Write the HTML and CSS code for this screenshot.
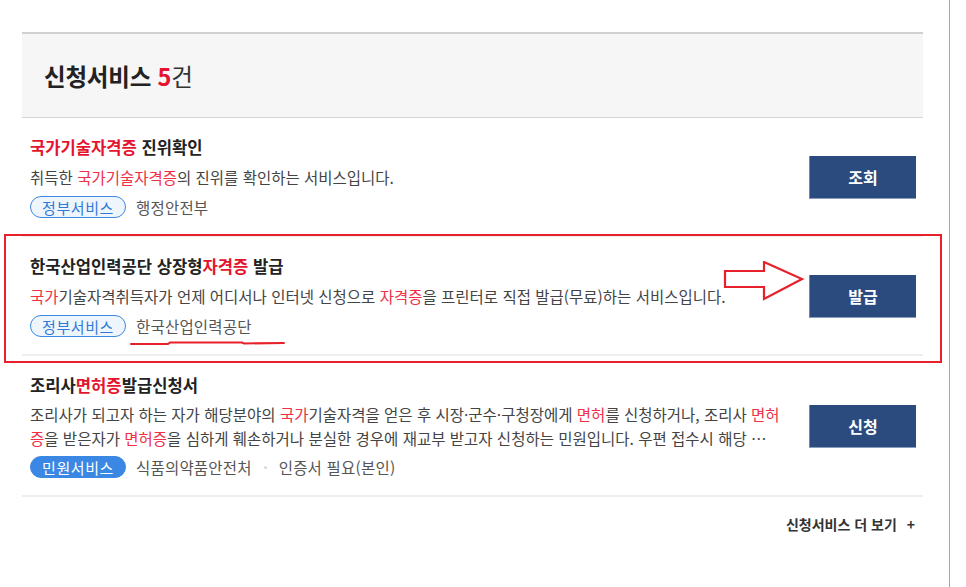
FILE: index.html
```html
<!DOCTYPE html>
<html lang="ko">
<head>
<meta charset="utf-8">
<title>신청서비스</title>
<link rel="stylesheet" href="styles.css">
</head>
<body>
<div class="page">
  <div class="content">
    <div class="section-head">
      <h2 class="section-title">신청서비스 <em class="count">5</em><span class="unit">건</span></h2>
    </div>
    <ul class="svc-list">
      <li class="svc">
        <div class="svc-body">
          <h3 class="svc-title"><span class="hl">국가기술자격증</span> 진위확인</h3>
          <p class="svc-desc">취득한 <span class="hl">국가기술자격증</span>의 진위를 확인하는 서비스입니다.</p>
          <div class="svc-tags">
            <span class="tag tag-line">정부서비스</span>
            <span class="org">행정안전부</span>
          </div>
        </div>
        <a class="svc-btn">조회</a>
      </li>
      <li class="svc">
        <div class="svc-body">
          <h3 class="svc-title">한국산업인력공단 상장형<span class="hl">자격증</span> 발급</h3>
          <p class="svc-desc"><span class="hl">국가</span>기술자격취득자가 언제 어디서나 인터넷 신청으로 <span class="hl">자격증</span>을 프린터로 직접 발급(무료)하는 서비스입니다.</p>
          <div class="svc-tags">
            <span class="tag tag-line">정부서비스</span>
            <span class="org">한국산업인력공단</span>
          </div>
        </div>
        <a class="svc-btn">발급</a>
      </li>
      <li class="svc">
        <div class="svc-body">
          <h3 class="svc-title">조리사<span class="hl">면허증</span>발급신청서</h3>
          <p class="svc-desc clamp">조리사가 되고자 하는 자가 해당분야의 <span class="hl">국가</span>기술자격을 얻은 후 시장·군수·구청장에게 <span class="hl">면허</span>를 신청하거나, 조리사 <span class="hl">면허증</span>을 받은자가 <span class="hl">면허증</span>을 심하게 훼손하거나 분실한 경우에 재교부 받고자 신청하는 민원입니다. 우편 접수시 해당 민원실로 제출하시기 바랍니다.</p>
          <div class="svc-tags">
            <span class="tag tag-fill">민원서비스</span>
            <span class="org">식품의약품안전처</span>
            <span class="sep"></span>
            <span class="org">인증서 필요(본인)</span>
          </div>
        </div>
        <a class="svc-btn">신청</a>
      </li>
    </ul>
    <div class="more-row">
      <a class="more">신청서비스 더 보기 <span class="plus">+</span></a>
    </div>
  </div>
  <div class="edge"></div>

  <div class="mark-box"></div>
  <svg class="mark-arrow" width="84" height="42" viewBox="0 0 84 42">
    <path d="M3 10 H42 V1 L80 18 L42 38 V26 H3 Z" fill="#fff" stroke="#e8202a" stroke-width="2.2" stroke-linejoin="miter"/>
  </svg>
  <svg class="mark-line" width="160" height="8" viewBox="0 0 160 8">
    <path d="M1 5 L38 5 L40 3.5 L112 3.5 L114 4.5 L154 4" fill="none" stroke="#e8202a" stroke-width="2" stroke-linecap="round"/>
  </svg>
</div>
</body>
</html>
```

FILE: styles.css
```css
* { box-sizing: border-box; }
html, body {
  margin: 0;
  padding: 0;
  background: #fff;
}
body {
  font-family: "Noto Sans CJK KR", "Noto Sans", sans-serif;
  color: #222;
}
.page {
  position: relative;
  width: 966px;
  height: 587px;
  display: flex;
}
.content {
  width: 949px;
  padding: 32px 26px 0 22px;
}
.edge {
  width: 1px;
  height: 587px;
  background: #a8a8a8;
}
.section-head {
  border-top: 2px solid #d0d0d0;
  border-bottom: 1px solid #d6d6d6;
  background: #f6f6f6;
  height: 86px;
  display: flex;
  align-items: center;
  padding-left: 22px;
  padding-top: 1px;
}
.section-title {
  margin: 0;
  font-size: 23.5px;
  font-weight: 700;
  color: #222;
  letter-spacing: -0.2px;
}
.count {
  font-style: normal;
  color: #e4142e;
}
.unit {
  font-weight: 400;
  color: #333;
}
.svc-list {
  list-style: none;
  margin: 0;
  padding: 0;
}
.svc {
  display: flex;
  align-items: center;
  gap: 29px;
  padding: 17px 7px 16px 8px;
  border-bottom: 2px solid #eeeeee;
}
.svc-body {
  flex: 1;
  min-width: 0;
}
.svc-title {
  margin: 0;
  font-size: 16.6px;
  line-height: 24px;
  font-weight: 700;
  color: #222;
}
.hl { color: #e4142e; }
.svc-desc .hl { color: #ef3047; }
.svc-desc {
  margin: 6px 0 0;
  font-size: 15.5px;
  line-height: 24px;
  color: #444;
}
.clamp {
  display: -webkit-box;
  -webkit-box-orient: vertical;
  -webkit-line-clamp: 2;
  overflow: hidden;
  margin-top: 5px;
  margin-bottom: -1px;
}
.svc-tags {
  margin-top: 6px;
  height: 24px;
  display: flex;
  align-items: center;
  gap: 10px;
}
.tag {
  display: inline-flex;
  align-items: center;
  height: 22px;
  padding: 0 11px;
  border-radius: 11px;
  font-size: 15px;
  letter-spacing: 0.6px;
}
.tag-line {
  border: 1px solid #3d89e0;
  background: #eef5fd;
  color: #2e7ad6;
}
.tag-fill {
  background: #3a87e4;
  border: 1px solid #3a87e4;
  color: #fff;
}
.org {
  font-size: 15.5px;
  color: #555;
  letter-spacing: 0.2px;
}
.sep {
  width: 3px;
  height: 3px;
  border-radius: 50%;
  background: #d8d8d8;
  margin: 0 2px;
}
.svc-btn {
  flex: none;
  width: 107px;
  height: 43px;
  display: flex;
  align-items: center;
  justify-content: center;
  background: #2b4b7e;
  border-left: 1px solid #6f86ad;
  border-bottom: 1px solid #8a9cbd;
  color: #fff;
  font-size: 16px;
  font-weight: 700;
}
.more-row {
  display: flex;
  justify-content: flex-end;
  padding: 15px 8px 0 0;
}
.more {
  font-size: 14px;
  font-weight: 700;
  color: #333;
  line-height: 24px;
}
.plus {
  margin-left: 6px;
}
.mark-box {
  position: absolute;
  left: 4px;
  top: 234px;
  width: 938px;
  height: 129px;
  border: 2px solid #e8202a;
}
.mark-arrow {
  position: absolute;
  left: 722px;
  top: 261px;
}
.mark-line {
  position: absolute;
  left: 130px;
  top: 339px;
}
```
